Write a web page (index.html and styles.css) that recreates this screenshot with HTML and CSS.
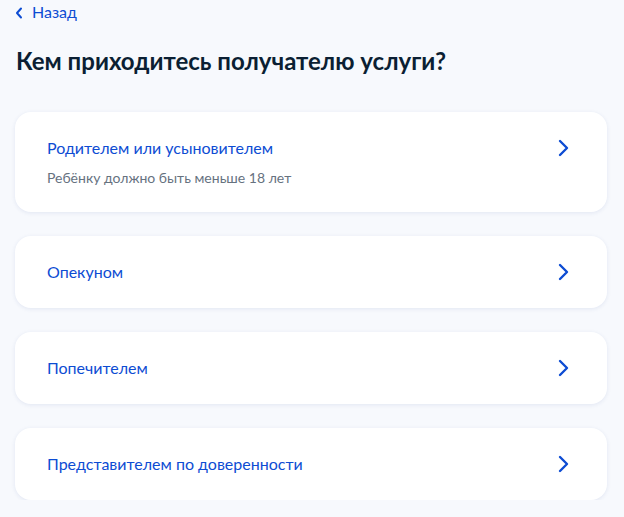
FILE: index.html
```html
<!DOCTYPE html>
<html lang="ru">
<head>
<meta charset="utf-8">
<title>Кем приходитесь получателю услуги?</title>
<link rel="stylesheet" href="styles.css">
</head>
<body>
<main class="page">
  <a class="back" href="#">
    <svg class="back-icon" width="8" height="12" viewBox="0 0 8 12" aria-hidden="true"><path d="M6 1.5 L2 6 L6 10.5" fill="none" stroke="currentColor" stroke-width="2" stroke-linecap="round" stroke-linejoin="round"/></svg>
    <span>Назад</span>
  </a>
  <h1 class="title">Кем приходитесь получателю услуги?</h1>
  <ul class="options">
    <li class="option">
      <div class="option-text">
        <div class="option-name">Родителем или усыновителем</div>
        <div class="option-hint">Ребёнку должно быть меньше 18 лет</div>
      </div>
      <svg class="chevron" width="24" height="24" viewBox="0 0 24 24" aria-hidden="true"><path d="M9 5 L16 12 L9 19" fill="none" stroke="currentColor" stroke-width="2.4" stroke-linecap="round" stroke-linejoin="round"/></svg>
    </li>
    <li class="option">
      <div class="option-text">
        <div class="option-name">Опекуном</div>
      </div>
      <svg class="chevron" width="24" height="24" viewBox="0 0 24 24" aria-hidden="true"><path d="M9 5 L16 12 L9 19" fill="none" stroke="currentColor" stroke-width="2.4" stroke-linecap="round" stroke-linejoin="round"/></svg>
    </li>
    <li class="option">
      <div class="option-text">
        <div class="option-name">Попечителем</div>
      </div>
      <svg class="chevron" width="24" height="24" viewBox="0 0 24 24" aria-hidden="true"><path d="M9 5 L16 12 L9 19" fill="none" stroke="currentColor" stroke-width="2.4" stroke-linecap="round" stroke-linejoin="round"/></svg>
    </li>
    <li class="option">
      <div class="option-text">
        <div class="option-name">Представителем по доверенности</div>
      </div>
      <svg class="chevron" width="24" height="24" viewBox="0 0 24 24" aria-hidden="true"><path d="M9 5 L16 12 L9 19" fill="none" stroke="currentColor" stroke-width="2.4" stroke-linecap="round" stroke-linejoin="round"/></svg>
    </li>
  </ul>
</main>
</body>
</html>
```
FILE: styles.css
```css
* { box-sizing: border-box; }

html, body {
  margin: 0;
  background: #f7f9fd;
  font-family: Lato, "Noto Sans", sans-serif;
  color: #0b1f33;
}

.page {
  width: 592px;
  margin-left: 15px;
  padding-top: 2px;
}

.back {
  display: inline-flex;
  align-items: center;
  gap: 9px;
  color: #0d4cd3;
  text-decoration: none;
  font-size: 16px;
  line-height: 20px;
}

.back-icon { margin-top: 1px; }

.title {
  margin: 23px 0 0 1px;
  font-size: 24px;
  line-height: 32px;
  font-weight: 700;
  color: #0b1f33;
}

.options {
  list-style: none;
  margin: 35px 0 0;
  padding: 0;
  display: flex;
  flex-direction: column;
  gap: 24px;
}

.option {
  display: flex;
  align-items: flex-start;
  justify-content: space-between;
  padding: 24px 32px;
  background: #fff;
  border-radius: 16px;
  box-shadow: 0 1px 4px rgba(44, 72, 143, 0.1);
}

.option-name {
  font-size: 16px;
  line-height: 24px;
  color: #0d4cd3;
}

.option-hint {
  margin-top: 8px;
  font-size: 14px;
  line-height: 20px;
  color: #66727f;
}

.chevron {
  flex: none;
  color: #0d4cd3;
}
```
